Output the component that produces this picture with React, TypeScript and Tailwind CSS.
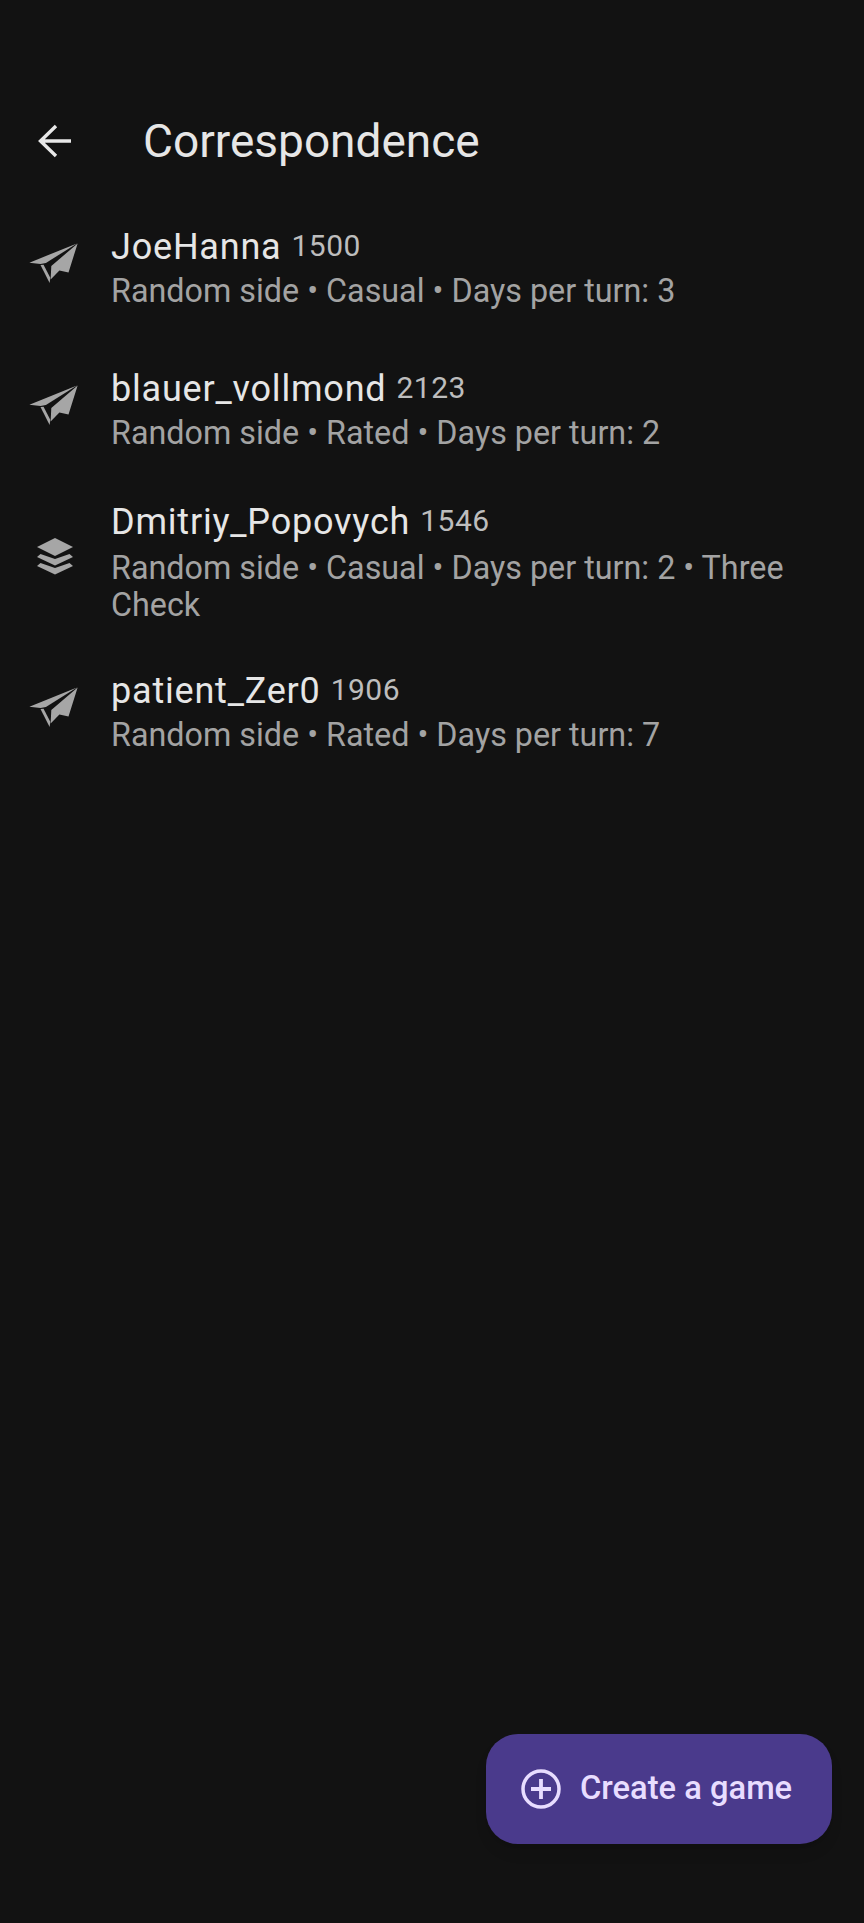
const font = { fontFamily: "Roboto, sans-serif" };

function Plane() {
  return (
    <svg width="54" height="46" viewBox="50 60 160 136" className="block">
      <path d="M57 127 L198 70 L106 128 L90 131 Z" fill="#a6a6a6" />
      <path d="M90 134 L99 133 L119 172 L117 187 Z" fill="#a6a6a6" />
      <path d="M200 70 L173 156 L146 150 L120 177 L122 137 Z" fill="#a6a6a6" />
    </svg>
  );
}

function Layers() {
  return (
    <svg width="36" height="37" viewBox="0 0 36 37" className="block">
      <path d="M18 0 L36 9 L18 18 L0 9 Z" fill="#a6a6a6" />
      <path d="M3.5 16 L18 21 L32.5 16 L36 19 L18 27.5 L0 19 Z" fill="#a6a6a6" />
      <path d="M3.5 25 L18 30 L32.5 25 L36 28 L18 36.5 L0 28 Z" fill="#a6a6a6" />
    </svg>
  );
}

const games = [
  { name: "JoeHanna", rating: "1500", sub: "Random side • Casual • Days per turn: 3", icon: "plane" },
  { name: "blauer_vollmond", rating: "2123", sub: "Random side • Rated • Days per turn: 2", icon: "plane" },
  { name: "Dmitriy_Popovych", rating: "1546", sub: "Random side • Casual • Days per turn: 2 • Three Check", icon: "layers" },
  { name: "patient_Zer0", rating: "1906", sub: "Random side • Rated • Days per turn: 7", icon: "plane" },
];

export default function App() {
  return (
    <div className="h-[1923px] w-[864px] bg-[#121212] flex flex-col overflow-hidden" style={font}>
      <header className="flex items-center h-[67px] mt-[107px] pl-[37px]">
        <svg width="34" height="34" viewBox="0 0 34 34" fill="none" stroke="#e8e8e8" strokeWidth="3.4" className="block">
          <path d="M34 17 H4 M19 2 L3.5 17 L19 32" />
        </svg>
        <h1 className="ml-[72px] text-[46px] leading-[50px] text-[#e6e6e6] font-normal">Correspondence</h1>
      </header>
      <ul className="flex flex-col mt-[20px]">
        {games.map((g) => {
          const wraps = g.icon === "layers";
          return (
            <li
              key={g.name}
              className={
                wraps
                  ? "flex items-center min-h-[142px] pl-[27px] pr-[60px] pt-[18px] pb-[14px]"
                  : "flex items-center min-h-[142px] pl-[27px] pr-[60px] py-[17px]"
              }
            >
              <div className="w-[84px] shrink-0 flex justify-start">
                {wraps ? (
                  <div className="pl-[10px] pb-[7px]"><Layers /></div>
                ) : (
                  <div className="pb-[5px]"><Plane /></div>
                )}
              </div>
              <div className="min-w-0">
                <div className="flex items-center">
                  <span className="text-[36px] leading-[52px] tracking-[0.8px] text-[#e6e6e6]">{g.name}</span>
                  <span className="ml-[10px] pb-[3px] text-[30px] leading-[49px] tracking-[0.5px] text-[#bdbdbd]">{g.rating}</span>
                </div>
                <p className={wraps ? "mt-[2px] text-[32.3px] leading-[37px] text-[#a3a3a3]" : "text-[32.3px] leading-[37px] text-[#a3a3a3]"}>{g.sub}</p>
              </div>
            </li>
          );
        })}
      </ul>
      <div className="mt-auto mb-[79px] mr-[32px] self-end w-[346px] h-[110px] rounded-[32px] bg-[#4a3a8c] shadow-lg flex items-center pl-[35px]">
        <svg width="40" height="40" viewBox="0 0 40 40" fill="none" stroke="#e8ddff" strokeWidth="3.5" className="block">
          <circle cx="20" cy="20" r="18" />
          <path d="M20 10 V30 M10 20 H30" strokeWidth="3.8" />
        </svg>
        <span className="ml-[19px] text-[32.7px] font-medium text-[#e8ddff]">Create a game</span>
      </div>
    </div>
  );
}
